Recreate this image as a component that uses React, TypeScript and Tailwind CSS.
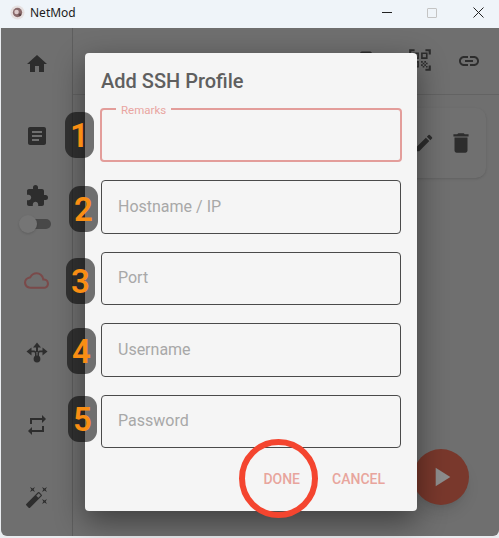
import React from "react";
import { MdHome, MdArticle, MdExtension, MdOutlineCloud, MdRepeat, MdAutoFixHigh, MdEdit, MdDelete, MdQrCodeScanner, MdLink, MdPlayArrow, MdBookmark } from "react-icons/md";

const fields = ["Hostname / IP", "Port", "Username", "Password"];

function Badge({ n, cls }: { n: string; cls: string }) {
  return (
    <div className={"absolute flex h-[46px] w-[29px] items-center justify-center rounded-[11px] bg-black/55 text-[33px] font-semibold leading-none text-[#f98e13] " + cls}>
      {n}
    </div>
  );
}

function MoveIcon() {
  return (
    <svg width="24" height="24" viewBox="0 0 24 24" className="mt-[47px]" fill="currentColor">
      <path d="M12 2.5 16 7.5H13V12H11V7.5H8Z" />
      <path d="M1.5 11.5 6.5 7.5V10.5H9C10.5 10.5 11.5 11.5 11.5 13V16H10V13.5C10 12.6 9.5 12.2 8.7 12.2H6.5V15.5Z" />
      <path d="M22.5 11.5 17.5 7.5V10.5H15C13.5 10.5 12.5 11.5 12.5 13V16H14V13.5C14 12.6 14.5 12.2 15.3 12.2H17.5V15.5Z" />
      <circle cx="12" cy="19" r="3.4" />
    </svg>
  );
}

export default function App() {
  return (
    <div className="relative flex h-[538px] w-[499px] flex-col overflow-hidden bg-[#e9ecef] pb-[2px] font-['Roboto',sans-serif]">
      <div className="flex h-[28px] shrink-0 items-center bg-[#eff4f9] pb-[3px] pl-[10px] text-[12px] text-[#1c1c1c] font-['Noto_Sans',sans-serif]">
        <svg width="15" height="15" viewBox="0 0 16 16" className="mr-[5px]">
          <circle cx="8" cy="8" r="7.5" fill="#e6e0e0" />
          <circle cx="8" cy="8" r="5" fill="#8a6a6b" />
          <circle cx="7" cy="7.5" r="2.4" fill="#dcc9c9" />
          <circle cx="10.5" cy="10.5" r="1.5" fill="#5c4546" />
        </svg>
        <span className="flex-1">NetMod</span>
        <div className="flex items-center">
          <div className="mr-[35px] h-[1px] w-[10px] bg-[#222]" />
          <div className="mr-[36px] h-[10px] w-[10px] rounded-[1px] border border-[#c4c4c4]" />
          <svg width="11" height="11" viewBox="0 0 11 11" className="mr-[15px]" stroke="#222" strokeWidth="1">
            <path d="M0.5 0.5 10.5 10.5M10.5 0.5 0.5 10.5" />
          </svg>
        </div>
      </div>

      <div className="ml-[1px] flex flex-1 overflow-hidden rounded-b-[6px] bg-[#6f6f6f]">
        <div className="flex w-[72px] shrink-0 flex-col items-center border-r border-[#5e5e5e] text-[#2d2d2d]">
          <MdHome size={24} className="mt-[24px]" />
          <MdArticle size={24} className="mt-[48px]" />
          <MdExtension size={24} className="mt-[36px]" />
          <div className="relative ml-[5px] mt-[11px] h-[10px] w-[23px] rounded-full bg-[#484848]">
            <div className="absolute -left-[9px] -top-[4px] h-[18px] w-[18px] rounded-full bg-[#757575] shadow" />
          </div>
          <MdOutlineCloud size={25} className="mt-[39px] text-[#7a4a4a]" />
          <MoveIcon />
          <MdRepeat size={24} className="mt-[49px]" />
          <MdAutoFixHigh size={24} className="mt-[48px]" />
        </div>
        <div className="flex min-w-0 flex-1 flex-col">
          <div className="flex h-[67px] shrink-0 items-center justify-end border-b border-[#636363] pr-[18px] text-[#2d2d2d]">
            <MdBookmark size={20} className="mb-[5px] mr-[31px]" />
            <MdQrCodeScanner size={26} className="-mt-[2px] mr-[24px]" />
            <MdLink size={24} />
          </div>
          <div className="ml-[12px] mr-[13px] mt-[13px] flex h-[70px] items-center justify-end gap-[13px] rounded-[10px] bg-[#707070] pr-[12px] text-[#2d2d2d] shadow">
            <MdEdit size={22} />
            <MdDelete size={26} />
          </div>
          <div className="mb-[31px] mr-[30px] mt-auto flex h-[56px] w-[56px] items-center justify-center self-end rounded-full bg-[#79382c] text-[#8d8d8d] shadow-lg">
            <MdPlayArrow size={32} />
          </div>
        </div>
      </div>

      <div className="absolute left-[85px] top-[53px] flex h-[458px] w-[332px] flex-col rounded-[4px] bg-[#f5f5f5] px-[16px] shadow-[0_10px_30px_rgba(0,0,0,0.45)]">
        <div className="mt-[16px] text-[20px] font-medium leading-[24px] text-[#5f5f5f]">Add SSH Profile</div>
        <div className="relative -ml-[1px] mt-[15px] h-[54px] w-[302px] shrink-0 rounded-[4px] border-2 border-[#e39d9a]">
          <span className="absolute -top-[6px] left-[14px] bg-[#f5f5f5] px-[5px] text-[11.5px] leading-[12px] text-[#e9a5a1]">Remarks</span>
        </div>
        <div className="mt-[18px] flex flex-col gap-[18px]">
          {fields.map((f) => (
            <div key={f} className="flex h-[53.5px] w-[300px] items-center rounded-[4px] border border-[#4a4a4a] pl-[16px] text-[16px] text-[#a8a8a8]">
              {f}
            </div>
          ))}
        </div>
        <div className="mt-[21px] flex justify-end gap-[32px] pr-[16px] text-[14px] font-medium leading-[20px] text-[#e8a59d]">
          <span>DONE</span>
          <span>CANCEL</span>
        </div>
      </div>

      <Badge n="1" cls="left-[65px] top-[112px]" />
      <Badge n="2" cls="left-[69px] top-[186px]" />
      <Badge n="3" cls="left-[66px] top-[258px]" />
      <Badge n="4" cls="left-[67px] top-[328px]" />
      <Badge n="5" cls="left-[68px] top-[396px]" />
      <div className="absolute left-[239px] top-[439px] h-[79px] w-[79px] rounded-full border-[6px] border-[#f4452f]" />
    </div>
  );
}
